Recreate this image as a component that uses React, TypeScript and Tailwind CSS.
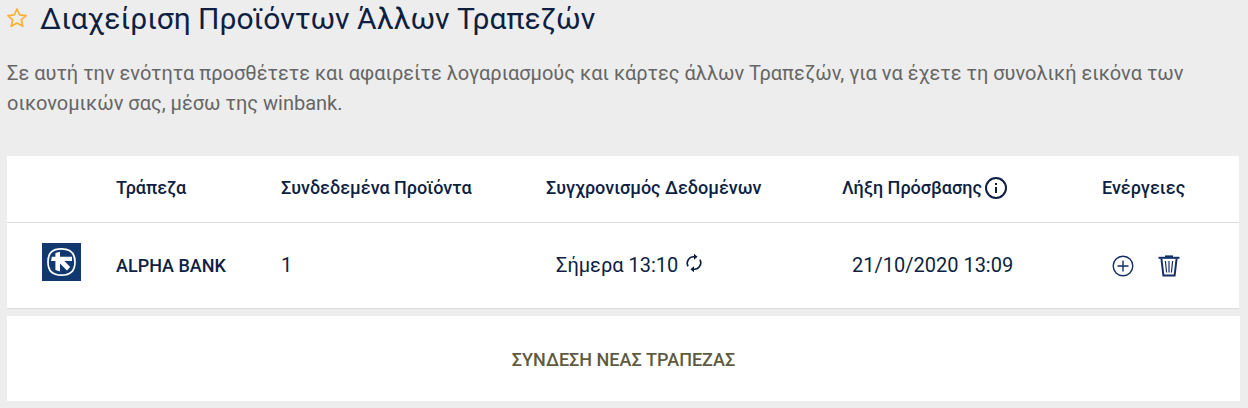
import React from "react";

type Account = {
  id: string;
  bank: string;
  products: number;
  lastSync: string;
  expires: string;
};

const accounts: Account[] = [
  {
    id: "alpha",
    bank: "ALPHA BANK",
    products: 1,
    lastSync: "Σήμερα 13:10",
    expires: "21/10/2020 13:09",
  },
];

const StarIcon = () => (
  <svg
    className="w-5 h-5"
    viewBox="0 0 20 20"
    fill="none"
    stroke="currentColor"
    strokeWidth="1.7"
    strokeLinejoin="round"
  >
    <path d="M10 1l2.7 5.9 6.4.7-4.8 4.3 1.4 6.4L10 15.1l-5.7 3.2 1.4-6.4L.9 7.6l6.4-.7z" />
  </svg>
);

const InfoIcon = () => (
  <svg className="w-6 h-6" viewBox="0 0 24 24" fill="none" stroke="currentColor">
    <circle cx="12" cy="12" r="10" strokeWidth="2" />
    <path d="M12 7v2M12 11v6" strokeWidth="2" />
  </svg>
);

const SyncIcon = () => (
  <svg className="w-5 h-5" viewBox="0 0 20 20" fill="none" stroke="currentColor" strokeWidth="1.6">
    <path d="M10.500 3.800A6.500 6.500 0 0 0 4 13.300M9.500 16.200A6.500 6.500 0 0 0 16 6.700" />
    <path d="M10 .8l3.600 3L10 6.800zM10 13.200l-3.600 3 3.600 3z" fill="currentColor" stroke="none" />
  </svg>
);

const AddIcon = () => (
  <svg
    className="w-[22px] h-[22px]"
    viewBox="0 0 22 22"
    fill="none"
    stroke="currentColor"
    strokeWidth="1.4"
  >
    <circle cx="11" cy="11" r="9.8" />
    <path d="M5.5 11h11M11 5.5v11" />
  </svg>
);

const TrashIcon = () => (
  <svg
    className="w-[22px] h-[22px]"
    viewBox="0 0 22 22"
    fill="none"
    stroke="currentColor"
  >
    <path d="M.5 2.8h21" strokeWidth="2" />
    <path d="M7 1.2h8" strokeWidth="1.6" />
    <path d="M3.4 3.5l2 17h11.2l2-17" strokeWidth="2" />
    <path d="M7.4 6l1.2 11.5M11 6v11.5M14.6 6l-1.2 11.5" strokeWidth="1.2" />
  </svg>
);

const AlphaLogo = () => (
  <svg className="w-[39px] h-[38px] block" viewBox="0 0 39 38" role="img" aria-label="Alpha Bank">
    <path d="M0 0h39v38H0z" fill="#11386f" />
    <path
      d="M19.5 5.8C29 5.8 33 10 33 19s-4 13.2-13.5 13.2S6 28 6 19 10 5.8 19.5 5.8z"
      fill="none"
      stroke="#fff"
      strokeWidth="1.7"
    />
    <path
      d="M13.4 10l4.6-1.2v5H30v4.300h-7.600l5.800 6-3.200 3.300-7-7v8l-4.600-1.400v-8.900H9l.8-4.300h3.600z"
      fill="#fff"
    />
  </svg>
);

const AccountRow = ({ account }: { account: Account }) => (
  <tr className="h-[86px] border-b border-[#dcdcdc] text-xl">
    <td className="pl-[35px] pb-1.5">
      <AlphaLogo />
    </td>
    <td className="pt-0.5 text-lg font-medium">{account.bank}</td>
    <td>{account.products}</td>
    <td className="pl-[10px]">
      <div className="flex items-center gap-1.5">
        {account.lastSync}
        <button type="button" aria-label="Συγχρονισμός" className="pb-1">
          <SyncIcon />
        </button>
      </div>
    </td>
    <td className="pl-[10px]">{account.expires}</td>
    <td className="pl-[10px] pt-0.5">
      <div className="flex items-center gap-6 text-[#142f66]">
        <button type="button" aria-label="Προσθήκη">
          <AddIcon />
        </button>
        <button type="button" aria-label="Διαγραφή">
          <TrashIcon />
        </button>
      </div>
    </td>
  </tr>
);

export default function App() {
  return (
    <main className="flex min-h-screen flex-col bg-[#ededed] pl-[7px] pr-2 pb-[7px] font-[Roboto,sans-serif] text-[#0d1f42]">
      <header className="flex items-center gap-[13px]">
        <button type="button" aria-label="Αγαπημένα" className="text-[#fbb034]">
          <StarIcon />
        </button>
        <h1 className="pt-0.5 text-3xl leading-[34px]">
          Διαχείριση Προϊόντων Άλλων Τραπεζών
        </h1>
      </header>

      <p className="mt-[22px] text-xl leading-[30px] text-[#666]">
        Σε αυτή την ενότητα προσθέτετε και αφαιρείτε λογαριασμούς και κάρτες
        άλλων Τραπεζών, για να έχετε τη συνολική εικόνα των οικονομικών σας,
        μέσω της winbank.
      </p>

      <div className="mt-[38px] pr-px">
        <table className="w-full table-fixed border-collapse bg-white text-left">
          <colgroup>
            <col className="w-[109px]" />
            <col className="w-[165px]" />
            <col className="w-[265px]" />
            <col className="w-[296px]" />
            <col className="w-[260px]" />
            <col />
          </colgroup>
          <thead>
            <tr className="h-[66px] border-b border-[#dcdcdc] text-lg [&>th]:font-medium [&>th]:pb-0.5">
              <td />
              <th scope="col">Τράπεζα</th>
              <th scope="col">Συνδεδεμένα Προϊόντα</th>
              <th scope="col">Συγχρονισμός Δεδομένων</th>
              <th scope="col">
                <div className="flex items-center gap-0.5">
                  Λήξη Πρόσβασης
                  <InfoIcon />
                </div>
              </th>
              <th scope="col">Ενέργειες</th>
            </tr>
          </thead>
          <tbody>
            {accounts.map((account) => (
              <AccountRow key={account.id} account={account} />
            ))}
          </tbody>
        </table>
      </div>

      <button
        type="button"
        className="mt-[7px] h-[85px] bg-white pt-1 text-lg font-medium text-[#5f5b40]"
      >
        ΣΥΝΔΕΣΗ ΝΕΑΣ ΤΡΑΠΕΖΑΣ
      </button>
    </main>
  );
}
